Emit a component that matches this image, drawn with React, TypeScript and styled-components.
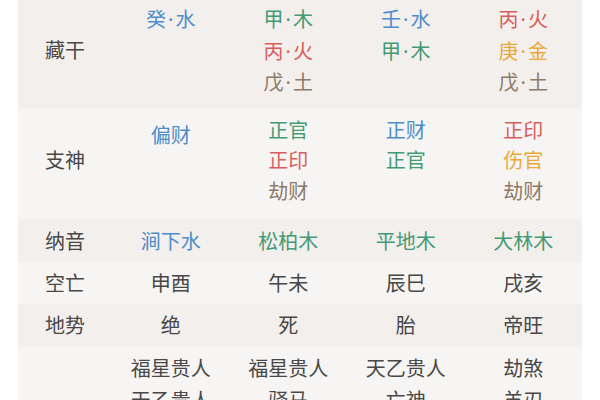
import React from "react";
import styled, { createGlobalStyle } from "styled-components";

type Tone = "blue" | "green" | "red" | "orange" | "earth" | "plain";

type Item = { text: string; tone: Tone };

type RowData = {
    label: string;
    band: "dark" | "light";
    lineHeight: number;
    pad: [number, number];
    cells: Item[][];
    firstShift?: number;
};

const toneColor: Record<Tone, string> = {
    blue: "#4c8dcb",
    green: "#459a76",
    red: "#d95f5e",
    orange: "#eba83a",
    earth: "#8d7a68",
    plain: "#484848",
};

const p = (text: string, tone: Tone = "plain"): Item => ({ text, tone });

const rows: RowData[] = [
    {
        label: "藏干",
        band: "dark",
        lineHeight: 31.5,
        pad: [4, 9],
        cells: [
            [p("癸·水", "blue")],
            [p("甲·木", "green"), p("丙·火", "red"), p("戊·土", "earth")],
            [p("壬·水", "blue"), p("甲·木", "green")],
            [p("丙·火", "red"), p("庚·金", "orange"), p("戊·土", "earth")],
        ],
    },
    {
        label: "支神",
        band: "light",
        lineHeight: 30.5,
        pad: [8, 12],
        firstShift: 5,
        cells: [
            [p("偏财", "blue")],
            [p("正官", "green"), p("正印", "red"), p("劫财", "earth")],
            [p("正财", "blue"), p("正官", "green")],
            [p("正印", "red"), p("伤官", "orange"), p("劫财", "earth")],
        ],
    },
    {
        label: "纳音",
        band: "dark",
        lineHeight: 32,
        pad: [7, 4],
        cells: [
            [p("涧下水", "blue")],
            [p("松柏木", "green")],
            [p("平地木", "green")],
            [p("大林木", "green")],
        ],
    },
    {
        label: "空亡",
        band: "light",
        lineHeight: 32,
        pad: [6, 4],
        cells: [[p("申酉")], [p("午未")], [p("辰巳")], [p("戌亥")]],
    },
    {
        label: "地势",
        band: "dark",
        lineHeight: 32,
        pad: [6, 5],
        cells: [[p("绝")], [p("死")], [p("胎")], [p("帝旺")]],
    },
    {
        label: "",
        band: "light",
        lineHeight: 32,
        pad: [6, 10],
        cells: [
            [p("福星贵人"), p("天乙贵人")],
            [p("福星贵人"), p("驿马")],
            [p("天乙贵人"), p("亡神")],
            [p("劫煞"), p("羊刃")],
        ],
    },
];

const renderText = (text: string) => {
    const parts = text.split("·");
    return parts.map((part, i) => (
        <React.Fragment key={i}>
            {i > 0 && <Dot>·</Dot>}
            {part}
        </React.Fragment>
    ));
};

const App = () => {
    return (
        <>
            <GlobalStyle />
            <Page>
                <Table>
                    {rows.map((row, i) => (
                        <Row key={i} $band={row.band} $pad={row.pad}>
                            <Label>{row.label}</Label>
                            {row.cells.map((cell, j) => (
                                <Cell
                                    key={j}
                                    $lineHeight={row.lineHeight}
                                    $shift={j === 0 ? row.firstShift ?? 0 : 0}
                                >
                                    {cell.map((item, k) => (
                                        <Entry key={k} $tone={item.tone}>
                                            {renderText(item.text)}
                                        </Entry>
                                    ))}
                                </Cell>
                            ))}
                        </Row>
                    ))}
                </Table>
            </Page>
        </>
    );
};

export default App;

const GlobalStyle = createGlobalStyle`
    html, body {
        margin: 0;
        padding: 0;
        background: #ffffff;
        overflow: hidden;
    }
    body {
        /* latin font first so the middle dot stays narrow */
        font-family: "Noto Sans", "Noto Sans CJK SC", sans-serif;
    }
`;

const Page = styled.div`
    width: 600px;
    height: 400px;
    overflow: hidden;
    padding: 0 18px;
    box-sizing: border-box;
`;

const Table = styled.div`
    display: flex;
    flex-direction: column;
    width: 564px;
`;

const Row = styled.div<{ $band: "dark" | "light"; $pad: [number, number] }>`
    display: grid;
    grid-template-columns: 94px repeat(4, 1fr);
    align-items: start;
    padding: ${({ $pad }) => `${$pad[0]}px 0 ${$pad[1]}px`};
    background-color: ${({ $band }) => ($band === "dark" ? "#f2efec" : "#f7f5f3")};
`;

const Label = styled.div`
    align-self: center;
    text-align: center;
    font-size: 20px;
    line-height: 32px;
    color: #484848;
`;

const Cell = styled.div<{ $lineHeight: number; $shift: number }>`
    display: flex;
    flex-direction: column;
    align-items: center;
    padding-top: ${({ $shift }) => $shift}px;
    font-size: 20px;
    line-height: ${({ $lineHeight }) => $lineHeight}px;
`;

const Entry = styled.span<{ $tone: Tone }>`
    color: ${({ $tone }) => toneColor[$tone]};
    white-space: nowrap;
`;

const Dot = styled.span`
    margin: 0 2px;
`;
